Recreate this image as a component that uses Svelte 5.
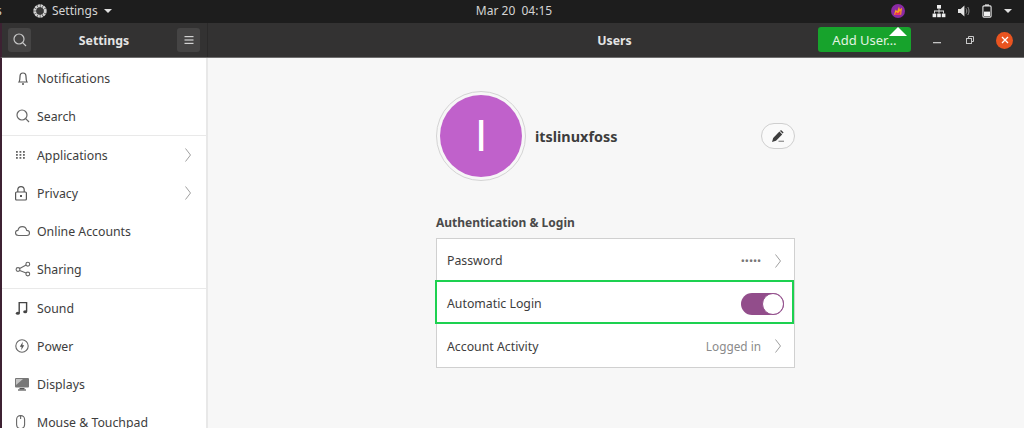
<script>
  // Ubuntu GNOME Settings, Users panel
  const groups = [
    [
      { label: 'Notifications', icon: 'bell' },
      { label: 'Search', icon: 'search' }
    ],
    [
      { label: 'Applications', icon: 'grid', more: true },
      { label: 'Privacy', icon: 'lock', more: true },
      { label: 'Online Accounts', icon: 'cloud' },
      { label: 'Sharing', icon: 'share' }
    ],
    [
      { label: 'Sound', icon: 'music' },
      { label: 'Power', icon: 'power' },
      { label: 'Displays', icon: 'display' },
      { label: 'Mouse & Touchpad', icon: 'mouse' }
    ]
  ];
</script>

{#snippet chevron()}
  <svg class="chev" width="8" height="14" viewBox="0 0 8 14"><path d="M1.5 0.5 L6.5 7 L1.5 13.5" fill="none" stroke="#a0a0a0" stroke-width="1"/></svg>
{/snippet}

{#snippet searchIcon(color)}
  <svg width="16" height="16" viewBox="0 0 16 16" fill="none" stroke={color} stroke-width="1.2"><circle cx="7" cy="7" r="5"/><path d="M10.7 10.7 L14 14"/></svg>
{/snippet}

{#snippet icon(name)}
  {#if name === 'bell'}
    <svg width="16" height="16" viewBox="0 0 16 16" fill="none" stroke="#555" stroke-width="1.2"><path d="M4 12 C5 10.5 5 9 5 6.5 C5 4.5 6.3 3 8 3 C9.7 3 11 4.5 11 6.5 C11 9 11 10.5 12 12 Z"/><path d="M7 14 H9" stroke-width="1.4"/></svg>
  {:else if name === 'search'}
    {@render searchIcon('#666')}
  {:else if name === 'grid'}
    <svg width="16" height="16" viewBox="0 0 16 16" fill="#666">
      {#each [4, 7, 10] as y}
        {#each [1, 4.5, 8] as x}
          <rect {x} {y} width="1.8" height="1.8"/>
        {/each}
      {/each}
    </svg>
  {:else if name === 'lock'}
    <svg width="16" height="16" viewBox="0 0 16 16" fill="none" stroke="#555" stroke-width="1.2"><rect x="0.6" y="7" width="10.8" height="8" rx="1"/><path d="M2.8 7 V4.8 C2.8 2.9 4.2 1.6 6 1.6 C7.8 1.6 9.2 2.9 9.2 4.8 V7"/><rect x="5" y="10" width="2" height="2" fill="#555" stroke="none"/></svg>
  {:else if name === 'cloud'}
    <svg width="16" height="16" viewBox="0 0 16 16" fill="none" stroke="#666" stroke-width="1.1"><path d="M3.5 12.5 C1.5 12.5 0.5 11.2 0.5 9.8 C0.5 8.4 1.6 7.4 2.9 7.4 C3.4 5 5.1 3.6 7.3 3.6 C9.7 3.6 11.3 5.2 11.7 7.4 C13.4 7.5 14.5 8.6 14.5 10 C14.5 11.5 13.3 12.5 11.9 12.5 Z"/></svg>
  {:else if name === 'share'}
    <svg width="16" height="16" viewBox="0 0 16 16" fill="none" stroke="#666" stroke-width="1.1"><circle cx="3" cy="8.5" r="1.9"/><circle cx="12.8" cy="3.2" r="1.9"/><circle cx="12.8" cy="13" r="1.9"/><path d="M4.7 7.6 L11.1 4.1 M4.7 9.4 L11.1 12.1"/></svg>
  {:else if name === 'music'}
    <svg width="16" height="16" viewBox="0 0 16 16" fill="none" stroke="#444" stroke-width="1.4"><path d="M4.2 13 V2.6 H11.6 V11.4"/><ellipse cx="2.8" cy="13.2" rx="2" ry="1.5" fill="#444" stroke="none"/><ellipse cx="10.2" cy="11.8" rx="2" ry="1.5" fill="#444" stroke="none"/></svg>
  {:else if name === 'power'}
    <svg width="16" height="16" viewBox="0 0 16 16"><circle cx="7" cy="8" r="6.2" fill="none" stroke="#666" stroke-width="1.1"/><path d="M7.8 3.8 L4.8 8.8 H6.6 L6.2 12.2 L9.2 7.2 H7.4 Z" fill="#555"/></svg>
  {:else if name === 'display'}
    <svg width="16" height="16" viewBox="0 0 16 16"><rect x="0" y="2" width="14" height="9.6" rx="1" fill="#777"/><path d="M1 3 H8 L1 9 Z" fill="#c4c4c4"/><rect x="4.5" y="12" width="5" height="1.4" fill="#555"/><rect x="3" y="13.4" width="8" height="1.2" fill="#555"/></svg>
  {:else if name === 'mouse'}
    <svg width="16" height="16" viewBox="0 0 16 16" fill="none" stroke="#666" stroke-width="1.1"><rect x="1.6" y="1.6" width="8" height="13" rx="3.8"/><path d="M5.6 1.6 V5"/></svg>
  {/if}
{/snippet}

<div class="screen">
  <header class="topbar">
    <div class="top-left">
      <span class="activities">s</span>
      <span class="app-menu">
        <svg width="14" height="14" viewBox="0 0 14 14" fill="none"><circle cx="7" cy="7" r="5.2" stroke="#d4d4d4" stroke-width="3" stroke-dasharray="2.2 0.5"/><circle cx="7" cy="7" r="3.2" fill="#3a3a3a"/></svg>
        Settings
        <i class="caret"></i>
      </span>
    </div>
    <div class="clock">Mar 20&nbsp; 04:15</div>
    <div class="tray">
      <svg class="shot" width="14" height="14" viewBox="0 0 14 14"><circle cx="7" cy="7" r="7" fill="#8a2aa3"/><path d="M3 10.8 L4.6 5.4 L6.2 7.2 L8 2.6 L8.8 5.6 L11 3.8 L10.2 10.8 Z" fill="#f8a51e"/><path d="M3.6 10.8 L5.2 8 L7 9.2 L9.4 6.4 L9.4 10.8 Z" fill="#ea2a5e"/></svg>
      <span class="tray-set">
        <svg width="14" height="14" viewBox="0 0 14 14" fill="#efefef"><rect x="5" y="1" width="4" height="3.6"/><rect x="0.6" y="9.6" width="3.6" height="3.6"/><rect x="5.2" y="9.6" width="3.6" height="3.6"/><rect x="9.8" y="9.6" width="3.6" height="3.6"/><path d="M6.6 4.6 H7.4 V6.6 H12 V9.6 H11.2 V7.4 H7.4 V9.6 H6.6 V7.4 H2.8 V9.6 H2 V6.6 H6.6 Z"/></svg>
        <svg width="14" height="14" viewBox="0 0 14 14"><path d="M1 5 H3.6 L7.4 1.6 V12.4 L3.6 9 H1 Z" fill="#e4e4e4"/><path d="M9 4.4 C10 5.6 10 8.4 9 9.6 M10.8 3 C12.4 5 12.4 9 10.8 11" fill="none" stroke="#8a8a8a" stroke-width="1"/></svg>
        <svg width="10" height="14" viewBox="0 0 10 14"><rect x="3" y="0.4" width="4" height="1.4" fill="#e4e4e4"/><rect x="0.9" y="1.9" width="8.2" height="11.2" rx="1" fill="none" stroke="#e4e4e4" stroke-width="1.1"/><rect x="2" y="7.6" width="6" height="4.4" fill="#f2f2f2"/></svg>
        <i class="caret"></i>
      </span>
    </div>
  </header>

  <div class="window">
    <div class="titlebar">
      <div class="side-head">
        <button class="head-btn" aria-label="Search">{@render searchIcon('#c8c8c8')}</button>
        <span class="side-title">Settings</span>
        <button class="head-btn" aria-label="Menu">
          <svg width="12" height="12" viewBox="0 0 12 12" fill="#d2d2d2"><rect x="1.5" y="2" width="9" height="1.2"/><rect x="1.5" y="5.4" width="9" height="1.2"/><rect x="1.5" y="8.8" width="9" height="1.2"/></svg>
        </button>
      </div>
      <div class="main-head">
        <span class="main-title">Users</span>
        <button class="add-user">Add User…</button>
        <div class="win-controls">
          <svg width="12" height="12" viewBox="0 0 12 12"><rect x="2" y="8" width="8" height="1.3" fill="#c4c4c4"/></svg>
          <svg width="12" height="12" viewBox="0 0 12 12" fill="none" stroke="#c8c8c8"><rect x="2.5" y="4.5" width="5" height="5"/><path d="M4.5 4.5 V2.5 H9.5 V7.5 H7.5"/></svg>
          <span class="close">
            <svg width="10" height="10" viewBox="0 0 10 10" stroke="#fff" stroke-width="1.3"><path d="M2 2 L8 8 M8 2 L2 8"/></svg>
          </span>
        </div>
      </div>
    </div>

    <div class="body">
      <nav class="sidebar">
        {#each groups as group}
          <ul class="group">
            {#each group as item}
              <li>
                <span class="nav-icon">{@render icon(item.icon)}</span>
                <span class="nav-label">{item.label}</span>
                {#if item.more}{@render chevron()}{/if}
              </li>
            {/each}
          </ul>
        {/each}
      </nav>

      <main class="content">
        <div class="panel">
          <div class="profile">
            <div class="avatar-ring"><div class="avatar">I</div></div>
            <span class="username">itslinuxfoss</span>
            <button class="edit" aria-label="Edit name">
              <svg width="14" height="14" viewBox="0 0 14 14"><path d="M1 13 L2.2 9 L8.4 2.6 L11.2 5.4 L5 11.8 Z" fill="#3d3d3d"/><path d="M9 2 L10 1 L12.6 3.6 L11.6 4.6 Z" fill="#3d3d3d"/><rect x="7.5" y="11.6" width="5.5" height="1.4" fill="#9a9a9a"/></svg>
            </button>
          </div>

          <h2>Authentication &amp; Login</h2>
          <div class="list">
            <div class="row">
              <span>Password</span>
              <span class="value dots">•••••</span>
              {@render chevron()}
            </div>
            <div class="row highlighted">
              <span>Automatic Login</span>
              <span class="switch"><i></i></span>
            </div>
            <div class="row last">
              <span>Account Activity</span>
              <span class="value">Logged in</span>
              {@render chevron()}
            </div>
          </div>
        </div>
      </main>
    </div>
  </div>

  <i class="pointer"></i>
</div>

<style>
  :global(body) {
    margin: 0;
    overflow: hidden;
  }
  .screen {
    position: relative;
    width: 1024px;
    height: 428px;
    overflow: hidden;
    font-family: "Noto Sans", "Open Sans", sans-serif;
    font-size: 12.3px;
    color: #3d3d3d;
    background: #f7f7f7;
  }
  button {
    font: inherit;
    border: 0;
    padding: 0;
  }
  svg {
    display: block;
    flex-shrink: 0;
  }

  .topbar {
    height: 23px;
    box-sizing: border-box;
    padding-bottom: 2px;
    display: grid;
    grid-template-columns: 1fr auto 1fr;
    align-items: center;
    background: #1d1d1d;
    color: #d4d4d4;
    font-size: 12px;
  }
  .top-left {
    display: flex;
    align-items: center;
  }
  .activities {
    width: 37px;
    margin-left: -4px;
  }
  .app-menu {
    display: flex;
    align-items: center;
    gap: 5px;
  }
  .caret {
    display: inline-block;
    width: 0;
    height: 0;
    margin-left: 1px;
    border-left: 4px solid transparent;
    border-right: 4px solid transparent;
    border-top: 4px solid #e0e0e0;
  }
  .clock {
    padding-left: 4px;
  }
  .tray {
    display: flex;
    align-items: center;
    justify-content: flex-end;
    padding-right: 12px;
  }
  .tray-set {
    display: flex;
    align-items: center;
    gap: 11px;
    margin-left: 27px;
  }

  .window {
    height: 405px;
    display: flex;
    flex-direction: column;
  }
  .titlebar {
    height: 34px;
    display: flex;
    flex-shrink: 0;
    background: #333232;
    border-left: 2px solid #3d2132;
    border-bottom: 1px solid #6f6e6e;
    box-sizing: content-box;
  }
  .side-head {
    width: 192px;
    margin-left: 6px;
    padding-right: 7px;
    display: flex;
    align-items: center;
    justify-content: space-between;
    border-right: 1px solid #2b2a2a;
  }
  .head-btn {
    width: 23px;
    height: 24px;
    display: flex;
    align-items: center;
    justify-content: center;
    border-radius: 3px;
    background: #454444;
  }
  .side-title {
    font-weight: 700;
    color: #e4e4e4;
  }
  .main-head {
    flex: 1;
    display: flex;
    align-items: center;
  }
  .main-title {
    width: 610px;
    box-sizing: border-box;
    padding-left: 203px;
    text-align: center;
    font-weight: 700;
    color: #e4e4e4;
  }
  .add-user {
    width: 93px;
    height: 25px;
    margin-top: -1px;
    border-radius: 3px;
    background: #17a32c;
    color: #e2f3e2;
    font-size: 13px;
  }
  .win-controls {
    flex: 1;
    display: flex;
    align-items: center;
    justify-content: space-between;
    padding: 0 11px 0 20px;
  }
  .close {
    width: 17px;
    height: 17px;
    border-radius: 50%;
    background: #e95420;
    display: flex;
    align-items: center;
    justify-content: center;
  }

  .body {
    flex: 1;
    min-height: 0;
    display: flex;
  }
  .sidebar {
    width: 204px;
    flex-shrink: 0;
    padding-top: 1px;
    border-left: 2px solid #3d2132;
    border-right: 2px solid #e8e8e8;
    background: #fff;
    color: #3d3d3d;
  }
  .group {
    list-style: none;
    margin: 0;
    padding: 0;
    border-bottom: 1px solid #e9e9e9;
  }
  .group li {
    height: 38px;
    display: flex;
    align-items: center;
    padding: 0 14px 0 13px;
  }
  .nav-icon {
    width: 22px;
    flex-shrink: 0;
  }
  .nav-label {
    flex: 1;
  }

  .content {
    flex: 1;
    min-width: 0;
  }
  .panel {
    width: 359px;
    margin-left: 228px;
  }
  .profile {
    height: 90px;
    margin-top: 33px;
    display: flex;
    align-items: center;
  }
  .avatar-ring {
    width: 90px;
    height: 90px;
    box-sizing: border-box;
    padding: 3px;
    border: 1px solid #d4d4d4;
    border-radius: 50%;
  }
  .avatar {
    height: 100%;
    border-radius: 50%;
    background: #c061cb;
    color: #fff;
    display: flex;
    align-items: center;
    justify-content: center;
    font-family: "Liberation Sans", sans-serif;
    font-size: 44px;
    line-height: 1;
  }
  .username {
    flex: 1;
    margin-left: 9px;
    font-size: 14.4px;
    font-weight: 700;
    color: #3d3d3d;
  }
  .edit {
    width: 34px;
    height: 26px;
    border: 1px solid #cfcfcf;
    border-radius: 13px;
    background: #fafafa;
    display: flex;
    align-items: center;
    justify-content: center;
  }
  h2 {
    margin: 33px 0 7px;
    font-size: 12px;
    line-height: 17px;
    font-weight: 700;
    color: #4a4a4a;
  }
  .list {
    border: 1px solid #d0d0d0;
    background: #fff;
  }
  .row {
    height: 43px;
    display: flex;
    align-items: center;
    gap: 13px;
    padding: 0 12px 0 10px;
  }
  .row.last {
    height: 42px;
  }
  .row > span:first-child {
    flex: 1;
  }
  .value {
    color: #8a8a8a;
    font-size: 11.8px;
  }
  .dots {
    font-size: 11px;
    letter-spacing: -0.1px;
    color: #777;
  }
  .highlighted {
    padding-right: 10px;
    position: relative;
  }
  .highlighted::after {
    content: '';
    position: absolute;
    left: -2px;
    right: 0;
    top: -2px;
    height: 44px;
    box-sizing: border-box;
    border: 2.5px solid #1dd150;
  }
  .switch {
    width: 43px;
    height: 22px;
    border-radius: 11px;
    background: #924d8b;
    position: relative;
    display: block;
  }
  .switch i {
    position: absolute;
    right: 0;
    top: 0;
    box-sizing: border-box;
    width: 22px;
    height: 22px;
    border-radius: 50%;
    background: #fff;
    border: 1px solid #924d8b;
  }
  .pointer {
    position: absolute;
    left: 889px;
    top: 27px;
    width: 0;
    height: 0;
    border-left: 9px solid transparent;
    border-right: 9px solid transparent;
    border-bottom: 9px solid #fff;
  }
</style>
